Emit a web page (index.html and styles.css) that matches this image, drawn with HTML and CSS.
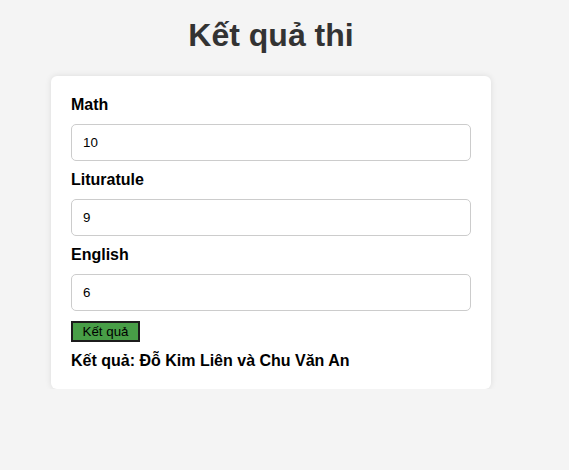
FILE: index.html
```html
<!DOCTYPE html>
<html lang="vi">
<head>
<meta charset="utf-8">
<title>Kết quả thi</title>
<link rel="stylesheet" href="styles.css">
</head>
<body>
<div class="wrap">
  <h1 class="title">Kết quả thi</h1>
  <div class="card">
    <label class="label" for="math">Math</label>
    <input class="field" id="math" type="text" value="10">
    <label class="label" for="lit">Lituratule</label>
    <input class="field" id="lit" type="text" value="9">
    <label class="label" for="eng">English</label>
    <input class="field" id="eng" type="text" value="6">
    <button class="btn" type="button">Kết quả</button>
    <div class="result">Kết quả: Đỗ Kim Liên và Chu Văn An</div>
  </div>
</div>
</body>
</html>
```

FILE: styles.css
```css
html, body {
  margin: 0;
  padding: 0;
}
body {
  background: #f4f4f4;
  font-family: "Liberation Sans", Arial, sans-serif;
}
.wrap {
  width: 440px;
  margin-left: 51px;
  padding-top: 17px;
}
.title {
  margin: 0 0 22px;
  text-align: center;
  font-size: 32px;
  font-weight: bold;
  color: #333;
}
.card {
  background: #fff;
  padding: 20px 20px 19px;
  border-radius: 6px;
  box-shadow: 0 0 6px rgba(0, 0, 0, 0.1);
}
.label {
  display: block;
  font-size: 16px;
  font-weight: bold;
  color: #000;
  margin-bottom: 10px;
}
.field {
  display: block;
  box-sizing: border-box;
  width: 100%;
  height: 37px;
  padding: 10px 11px;
  margin: 0 0 10px;
  border: 1px solid #ccc;
  border-radius: 5px;
  font-family: "Liberation Sans", Arial, sans-serif;
  font-size: 13.33px;
  color: #000;
  background: #fff;
}
.btn {
  display: block;
  box-sizing: border-box;
  width: 69px;
  height: 21px;
  padding: 1px 6px;
  border: 2px solid #1c1c1c;
  background: #489e47;
  font-family: "Liberation Sans", Arial, sans-serif;
  font-size: 13.33px;
  color: #000;
}
.result {
  margin-top: 10px;
  font-size: 16px;
  font-weight: bold;
  color: #000;
}
```
